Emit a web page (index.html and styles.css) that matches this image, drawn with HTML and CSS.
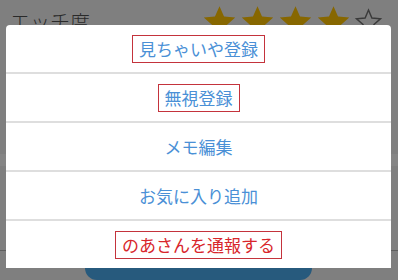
FILE: index.html
```html
<!DOCTYPE html>
<html lang="ja">
<head>
<meta charset="utf-8">
<link rel="stylesheet" href="styles.css">
</head>
<body>
<div class="page">
  <div class="rating-row">
    <span class="label">エッチ度</span>
    <div class="stars">
      <svg class="star" viewBox="0 0 24 24"><path d="M12 1.5l3.1 7.1 7.7.7-5.8 5.1 1.7 7.6L12 18l-6.7 4 1.7-7.6-5.8-5.1 7.7-.7z" fill="#876700"/></svg>
      <svg class="star" viewBox="0 0 24 24"><path d="M12 1.5l3.1 7.1 7.7.7-5.8 5.1 1.7 7.6L12 18l-6.7 4 1.7-7.6-5.8-5.1 7.7-.7z" fill="#876700"/></svg>
      <svg class="star" viewBox="0 0 24 24"><path d="M12 1.5l3.1 7.1 7.7.7-5.8 5.1 1.7 7.6L12 18l-6.7 4 1.7-7.6-5.8-5.1 7.7-.7z" fill="#876700"/></svg>
      <svg class="star" viewBox="0 0 24 24"><path d="M12 1.5l3.1 7.1 7.7.7-5.8 5.1 1.7 7.6L12 18l-6.7 4 1.7-7.6-5.8-5.1 7.7-.7z" fill="#876700"/></svg>
      <svg class="star star-empty" viewBox="0 0 24 24"><path d="M12 2.5l2.8 6.6 7.1.6-5.4 4.7 1.6 7L12 17.7l-6.1 3.7 1.6-7-5.4-4.7 7.1-.6z" fill="none" stroke="#3a3a3a" stroke-width="1.2" stroke-linejoin="miter"/></svg>
    </div>
  </div>
  <div class="band"></div>
  <div class="rule"></div>
  <div class="bottom-btn"></div>
</div>

<div class="sheet">
  <div class="item"><span class="boxed blue">見ちゃいや登録</span></div>
  <div class="item"><span class="boxed blue">無視登録</span></div>
  <div class="item"><span class="plain blue">メモ編集</span></div>
  <div class="item"><span class="plain blue">お気に入り追加</span></div>
  <div class="item"><span class="boxed red">のあさんを通報する</span></div>
</div>
</body>
</html>
```
FILE: styles.css
```css
*, *::before, *::after {
  box-sizing: border-box;
}

html, body {
  margin: 0;
  padding: 0;
  width: 398px;
  height: 280px;
  overflow: hidden;
  background: #7f7f7f;
  font-family: "Noto Sans CJK JP", "Noto Sans", sans-serif;
}

.page {
  position: relative;
  height: 280px;
  display: flex;
  flex-direction: column;
}

.rating-row {
  display: flex;
  justify-content: space-between;
  align-items: flex-start;
  padding: 0 15px 0 10px;
  height: 40px;
}

.label {
  font-size: 20px;
  line-height: 28px;
  padding-top: 8px;
  color: #2a2a2a;
  font-weight: 300;
}

.stars {
  display: flex;
  align-items: center;
  gap: 3px;
  padding-top: 4px;
}

.star {
  width: 35px;
  height: 35px;
}

.star-empty {
  width: 29px;
  height: 29px;
}

.band {
  margin-top: 115px;
  height: 25px;
  background: #858585;
}

.rule {
  margin-top: 84px;
  height: 1px;
  background: #5e5e5e;
}

.bottom-btn {
  margin: 5px 86px 0 85px;
  height: 50px;
  border-radius: 24px;
  background: #275a7d;
}

.sheet {
  position: absolute;
  left: 6px;
  top: 25px;
  width: 385px;
  background: #ffffff;
  border-radius: 4px 4px 0 0;
  display: flex;
  flex-direction: column;
}

.item {
  height: 49px;
  display: flex;
  align-items: center;
  justify-content: center;
}

.item:first-child {
  height: 47px;
}

.item + .item {
  border-top: 2px solid #dedede;
}

.boxed,
.plain {
  font-size: 17px;
  line-height: 26px;
  padding: 0 6px;
  white-space: nowrap;
}

.boxed {
  border: 1px solid #c4333c;
}

.plain {
  border: 1px solid transparent;
}

.blue {
  color: #4a90d6;
}

.red {
  color: #d8262c;
}
```
